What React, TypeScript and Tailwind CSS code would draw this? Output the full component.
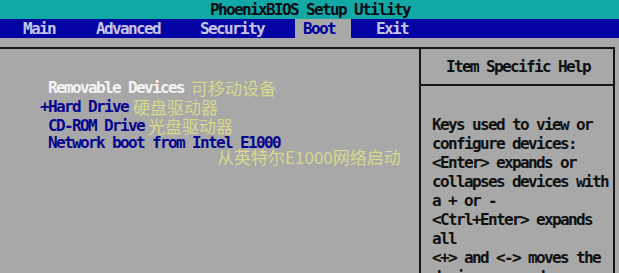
const bios = "font-['DejaVu_Sans_Mono',monospace] font-bold text-[16px] tracking-[-1.63px]";
const cjk = "font-['Noto_Sans_CJK_SC','Noto_Sans',sans-serif] font-normal text-[17px] tracking-normal text-[#d8d88e]";

const menu = [
  { label: "Main", cls: "ml-[15px] pl-[8px] pr-[8px]" },
  { label: "Advanced", cls: "ml-[25px] pl-[8px] pr-[8px]" },
  { label: "Security", cls: "ml-[24px] pl-[8px] pr-[8px]" },
  { label: "Boot", cls: "ml-[23px] pl-[8px] pr-[16px] bg-[#a8a8a8] text-[#0000a0]" },
  { label: "Exit", cls: "ml-[17px] pl-[8px] pr-[8px]" },
];

const help = [
  "Keys used to view or",
  "configure devices:",
  "<Enter> expands or",
  "collapses devices with",
  "a + or -",
  "<Ctrl+Enter> expands",
  "all",
  "<+> and <-> moves the",
  "device up or down.",
  "<n> May move removable",
];

export default function App() {
  return (
    <div className={`w-[619px] h-[273px] overflow-hidden bg-[#a8a8a8] ${bios}`}>
      <div className="h-[19px] bg-[#12a8a6] text-[#0c0c14] flex items-center justify-center leading-[19px] pl-[1px]">
        PhoenixBIOS Setup Utility
      </div>
      <div className="h-[19px] bg-[#0404a4] text-[#c4c4e6] flex items-stretch leading-[19px]">
        {menu.map((m) => (
          <span key={m.label} className={m.cls}>
            {m.label}
          </span>
        ))}
      </div>

      <div className="mt-[9px] mr-[4px] h-[240px] border-t-2 border-r-2 border-[#161616] flex">
        {/* left: boot order */}
        <div className="w-[419px] pt-[27px] leading-[19px] text-[#06068e]">
          <div className="flex items-baseline pl-[48px] h-[19px]">
            <span className="text-[#f4f4f4]">Removable Devices</span>
            <span className={`${cjk} ml-[7px] relative top-[2px]`}>可移动设备</span>
          </div>
          <div className="flex items-baseline pl-[40px] h-[19px]">
            <span>+Hard Drive</span>
            <span className={`${cjk} ml-[5px] relative top-[2px]`}>硬盘驱动器</span>
          </div>
          <div className="flex items-baseline pl-[48px] h-[19px]">
            <span>CD-ROM Drive</span>
            <span className={`${cjk} ml-[4px] relative top-[2px]`}>光盘驱动器</span>
          </div>
          <div className="pl-[48px] h-[19px]">Network boot from Intel E1000</div>
          <div className={`${cjk} ml-[217px] -mt-[5px] leading-[20px]`}>从英特尔E1000网络启动</div>
        </div>

        {/* right: help */}
        <div className="flex-1 border-l-2 border-[#161616] text-[#101010]">
          <div className="h-[37px] border-b-2 border-[#161616] flex items-center justify-center pl-[2px]">
            Item Specific Help
          </div>
          <div className="pt-[29px] pl-[11px] leading-[19px] whitespace-pre">
            {help.map((l) => (
              <div key={l} className="h-[19px]">
                {l}
              </div>
            ))}
          </div>
        </div>
      </div>
    </div>
  );
}
